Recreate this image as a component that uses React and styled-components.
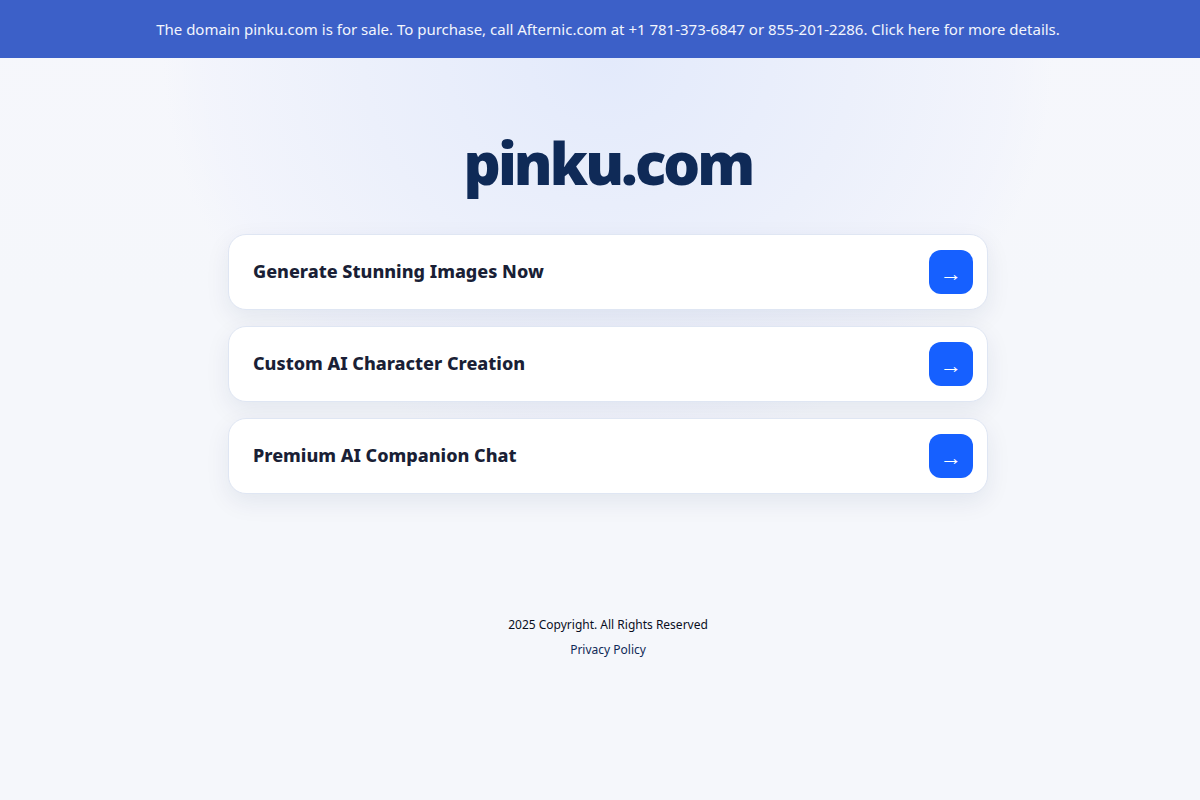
import React from 'react';
import styled, { createGlobalStyle } from 'styled-components';

const GlobalStyle = createGlobalStyle`
    html, body {
        margin: 0;
        padding: 0;
        overflow-x: hidden;
        background: #f5f7fb;
    }
    body {
        font-family: "Noto Sans", sans-serif;
    }
`

const Page = styled.div`
    width: 1216px;
    height: 800px;
    overflow: hidden;
    background:
        radial-gradient(ellipse 445px 400px at 50% 58px, #e3eafb 0%, #ecf0fb 55%, rgba(242, 244, 252, 0.85) 90%, rgba(245, 247, 252, 0) 100%),
        linear-gradient(180deg, #f6f7fc 0, #f5f7fb 300px);
`
const Banner = styled.a`
    display: block;
    height: 58px;
    background: #3c60c8;
    color: #f2f5fd;
    font-size: 15px;
    line-height: 58px;
    text-align: center;
    text-decoration: none;
`
const Main = styled.main`
    display: flex;
    flex-direction: column;
    align-items: center;
    padding-top: 67px;
`
const Logo = styled.h1`
    margin: 0 0 34px;
    color: #0f2a57;
    font-size: 58px;
    font-weight: 900;
    line-height: 75px;
    letter-spacing: -2.9px;
`
const CardList = styled.div`
    display: flex;
    flex-direction: column;
    gap: 16px;
    width: 760px;
`
const Card = styled.a`
    display: flex;
    align-items: center;
    justify-content: space-between;
    box-sizing: border-box;
    height: 76px;
    padding: 0 14px 0 24px;
    background: #fff;
    border: 1px solid #dfe6f3;
    border-radius: 18px;
    box-shadow: 0 8px 24px rgba(15, 42, 87, 0.08);
    color: #1a1f36;
    text-decoration: none;
`
const CardTitle = styled.span`
    font-size: 18px;
    font-weight: 800;
    line-height: 24px;
    padding-bottom: 2px;
`
const ArrowButton = styled.span`
    display: flex;
    align-items: center;
    justify-content: center;
    width: 44px;
    height: 44px;
    background: #1660ff;
    border-radius: 12px;
    color: #fff;
    font-size: 22px;
    line-height: 1;
    box-sizing: border-box;
`
const Footer = styled.footer`
    display: flex;
    flex-direction: column;
    align-items: center;
    gap: 7px;
    margin-top: 122px;
    font-size: 12px;
    line-height: 18px;
    color: #0a0f1e;
`
const PolicyLink = styled.a`
    color: #0f2a57;
    text-decoration: none;
`

const links = [
    'Generate Stunning Images Now',
    'Custom AI Character Creation',
    'Premium AI Companion Chat',
];

const App = () => {
    return (
        <Page>
            <GlobalStyle />
            <Banner href="#">The domain pinku.com is for sale. To purchase, call Afternic.com at +1 781-373-6847 or 855-201-2286. Click here for more details.</Banner>
            <Main>
                <Logo>pinku.com</Logo>
                <CardList>
                    {links.map((title) => (
                        <Card href="#" key={title}>
                            <CardTitle>{title}</CardTitle>
                            <ArrowButton>→</ArrowButton>
                        </Card>
                    ))}
                </CardList>
                <Footer>
                    <span>2025 Copyright. All Rights Reserved</span>
                    <PolicyLink href="#">Privacy Policy</PolicyLink>
                </Footer>
            </Main>
        </Page>
    );
}

export default App;
